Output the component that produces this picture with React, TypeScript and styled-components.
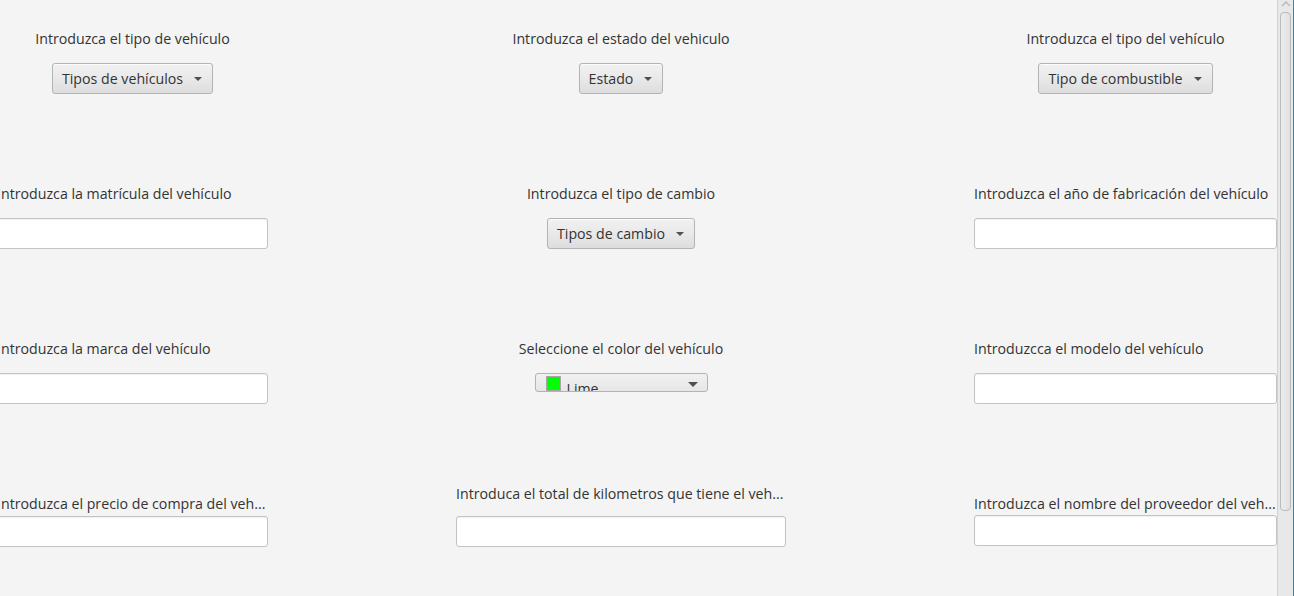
import React from "react";
import styled, { createGlobalStyle } from "styled-components";

const Global = createGlobalStyle`
  html, body { margin: 0; padding: 0; background: #f4f4f4; overflow: hidden; }
  body { font-family: "Open Sans", "Noto Sans", sans-serif; color: #333333; }
  * { box-sizing: border-box; }
`;

const Window = styled.div`
  display: flex;
  width: 1294px;
  height: 596px;
  background: #f4f4f4;
`;

const Viewport = styled.div`
  flex: 1;
  overflow: hidden;
  min-width: 0;
`;

const Grid = styled.div`
  display: grid;
  grid-template-columns: 271px 330px 303px;
  grid-auto-rows: 155px;
  column-gap: 188px;
  margin-left: -3px;
  width: 1280px;
`;

const Cell = styled.div<{ $center?: boolean; $top?: number; $gap?: number }>`
  display: flex;
  flex-direction: column;
  align-items: ${(p) => (p.$center ? "center" : "stretch")};
  padding-top: ${(p) => p.$top ?? 29}px;
  gap: ${(p) => p.$gap ?? 15}px;
  min-width: 0;
`;

const Label = styled.div`
  font-size: 14.2px;
  line-height: 19px;
  height: 19px;
  color: #333333;
  white-space: nowrap;
  overflow: hidden;
`;

const Combo = styled.div`
  display: flex;
  align-items: center;
  height: 31px;
  padding: 0 10px 0 9px;
  gap: 11px;
  border: 1px solid #b3b3b3;
  border-radius: 3px;
  background: linear-gradient(to bottom, #f1f1f1 0%, #e9e9e9 50%, #dddddd 100%);
  box-shadow: inset 0 1px 0 rgba(255, 255, 255, 0.7);
  font-size: 14.2px;
  color: #333333;
  white-space: nowrap;
`;

const Arrow = styled.span<{ $w?: number; $h?: number }>`
  display: inline-block;
  width: 0;
  height: 0;
  border-left: ${(p) => (p.$w ?? 8) / 2}px solid transparent;
  border-right: ${(p) => (p.$w ?? 8) / 2}px solid transparent;
  border-top: ${(p) => p.$h ?? 4}px solid #4f4f4f;
  flex: none;
`;

const Field = styled.div`
  height: 31px;
  background: #ffffff;
  border: 1px solid #c3c3c3;
  border-radius: 3px;
  box-shadow: inset 0 1px 1px rgba(0, 0, 0, 0.06);
`;

const Picker = styled.div`
  display: flex;
  align-items: flex-start;
  width: 173px;
  height: 19px;
  overflow: hidden;
  padding: 1px 9px 0 10px;
  border: 1px solid #b3b3b3;
  border-radius: 3px;
  background: linear-gradient(to bottom, #f1f1f1 0%, #e6e6e6 100%);
`;

const Swatch = styled.span<{ $color: string }>`
  width: 15px;
  height: 15px;
  margin-top: 1px;
  flex: none;
  background: ${(p) => p.$color};
  border: 1px solid #a8a8a8;
`;

const PickerText = styled.span`
  margin-left: 6px;
  margin-top: 4px;
  font-size: 14.2px;
  line-height: 19px;
  color: #333333;
`;

const PickerArrow = styled.span`
  margin-left: auto;
  margin-top: 7px;
  display: flex;
`;

const ScrollBar = styled.div`
  width: 16px;
  flex: none;
  background: #e8e8e8;
  border-left: 1px solid #d2d2d2;
  display: flex;
  flex-direction: column;
  align-items: center;
`;

const ArrowUp = styled.svg`
  margin-top: 1px;
  flex: none;
`;

const Thumb = styled.div`
  margin-top: 5px;
  width: 11px;
  height: 499px;
  border: 1px solid #b9b9b9;
  border-radius: 4px;
  background: linear-gradient(to right, #ececec, #e0e0e0);
`;

const Accent = styled.div`
  width: 1px;
  flex: none;
  background: #1b8ad3;
`;

const ComboBox = ({ text }: { text: string }) => (
  <Combo>
    <span>{text}</span>
    <Arrow />
  </Combo>
);

export default function App() {
  return (
    <>
      <Global />
      <Window>
        <Viewport>
          <Grid>
            <Cell $center>
              <Label>Introduzca el tipo de vehículo</Label>
              <ComboBox text="Tipos de vehículos" />
            </Cell>
            <Cell $center>
              <Label>Introduzca el estado del vehiculo</Label>
              <ComboBox text="Estado" />
            </Cell>
            <Cell $center>
              <Label>Introduzca el tipo del vehículo</Label>
              <ComboBox text="Tipo de combustible" />
            </Cell>

            <Cell>
              <Label>Introduzca la matrícula del vehículo</Label>
              <Field />
            </Cell>
            <Cell $center>
              <Label>Introduzca el tipo de cambio</Label>
              <ComboBox text="Tipos de cambio" />
            </Cell>
            <Cell>
              <Label>Introduzca el año de fabricación del vehículo</Label>
              <Field />
            </Cell>

            <Cell>
              <Label>Introduzca la marca del vehículo</Label>
              <Field />
            </Cell>
            <Cell $center>
              <Label>Seleccione el color del vehículo</Label>
              <Picker>
                <Swatch $color="#00ff00" />
                <PickerText>Lime</PickerText>
                <PickerArrow>
                  <Arrow $w={10} $h={5} />
                </PickerArrow>
              </Picker>
            </Cell>
            <Cell>
              <Label>Introduzcca el modelo del vehículo</Label>
              <Field />
            </Cell>

            <Cell $top={29} $gap={3}>
              <Label>Introduzca el precio de compra del veh...</Label>
              <Field />
            </Cell>
            <Cell $top={19} $gap={13}>
              <Label>Introduca el total de kilometros que tiene el veh...</Label>
              <Field />
            </Cell>
            <Cell $top={29} $gap={2}>
              <Label>Introduzca el nombre del proveedor del veh...</Label>
              <Field />
            </Cell>
          </Grid>
        </Viewport>
        <ScrollBar>
          <ArrowUp width="10" height="6" viewBox="0 0 10 6">
            <path d="M1 5 L5 1 L9 5" fill="none" stroke="#b8b8b8" strokeWidth="1.3" />
          </ArrowUp>
          <Thumb />
        </ScrollBar>
        <Accent />
      </Window>
    </>
  );
}
